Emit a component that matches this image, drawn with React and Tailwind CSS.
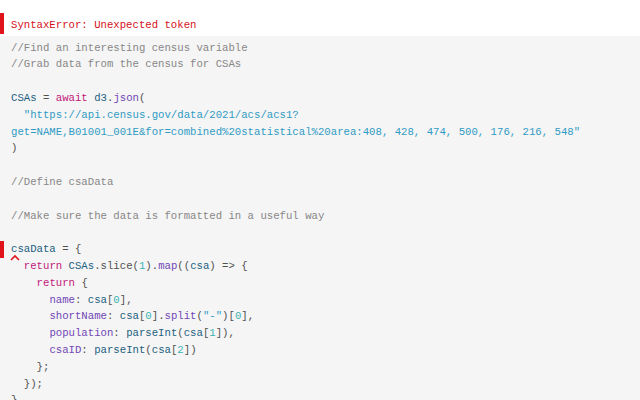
import React from "react";

const C = {
  cm: "text-[#878787]",
  kw: "text-[#c2187a]",
  str: "text-[#2f9bc4]",
  num: "text-[#3bb3b3]",
  prop: "text-[#7046b5]",
  fn: "text-[#7046b5]",
  v: "text-[#1c6080]",
  p: "text-[#505050]",
};

const S = ({ c, children }) => <span className={C[c]}>{children}</span>;

const lines = [
  [<S c="cm">//Find an interesting census variable</S>],
  [<S c="cm">//Grab data from the census for CSAs</S>],
  [],
  [<S c="v">CSAs</S>, <S c="p"> = </S>, <S c="kw">await</S>, <S c="p"> </S>, <S c="v">d3</S>, <S c="p">.</S>, <S c="fn">json</S>, <S c="p">(</S>],
  [<S c="str">{'  "https://api.census.gov/data/2021/acs/acs1?'}</S>],
  [<S c="str">{'get=NAME,B01001_001E&for=combined%20statistical%20area:408, 428, 474, 500, 176, 216, 548"'}</S>],
  [<S c="p">)</S>],
  [],
  [<S c="cm">//Define csaData</S>],
  [],
  [<S c="cm">//Make sure the data is formatted in a useful way</S>],
  [],
  "err",
  [<S c="p">{"  "}</S>, <S c="kw">return</S>, <S c="p"> </S>, <S c="v">CSAs</S>, <S c="p">.slice(</S>, <S c="num">1</S>, <S c="p">).</S>, <S c="fn">map</S>, <S c="p">((</S>, <S c="v">csa</S>, <S c="p">) =&gt; {"{"}</S>],
  [<S c="p">{"    "}</S>, <S c="kw">return</S>, <S c="p"> {"{"}</S>],
  [<S c="p">{"      "}</S>, <S c="prop">name</S>, <S c="p">: </S>, <S c="v">csa</S>, <S c="p">[</S>, <S c="num">0</S>, <S c="p">],</S>],
  [<S c="p">{"      "}</S>, <S c="prop">shortName</S>, <S c="p">: </S>, <S c="v">csa</S>, <S c="p">[</S>, <S c="num">0</S>, <S c="p">].</S>, <S c="fn">split</S>, <S c="p">(</S>, <S c="str">"-"</S>, <S c="p">)[</S>, <S c="num">0</S>, <S c="p">],</S>],
  [<S c="p">{"      "}</S>, <S c="prop">population</S>, <S c="p">: </S>, <S c="v">parseInt</S>, <S c="p">(</S>, <S c="v">csa</S>, <S c="p">[</S>, <S c="num">1</S>, <S c="p">]),</S>],
  [<S c="p">{"      "}</S>, <S c="prop">csaID</S>, <S c="p">: </S>, <S c="v">parseInt</S>, <S c="p">(</S>, <S c="v">csa</S>, <S c="p">[</S>, <S c="num">2</S>, <S c="p">])</S>],
  [<S c="p">{"    };"}</S>],
  [<S c="p">{"  });"}</S>],
  [<S c="p">{"}"}</S>],
];

export default function App() {
  return (
    <div
      className="w-[640px] h-[400px] overflow-hidden bg-white text-[10.67px]"
      style={{ fontFamily: '"Liberation Mono", monospace' }}
    >
      <div className="pt-[13px] h-[36px]">
        <div className="h-[21px] border-l-[4px] border-[#e0121b] pl-[7px] pt-[4px] leading-[16px] text-[#d4111c] whitespace-pre">
          SyntaxError: Unexpected token
        </div>
      </div>
      <div className="bg-[#f5f5f5] pt-[3.6px] pb-4">
        {lines.map((l, i) =>
          l === "err" ? (
            <div key={i} className="relative h-[16.8px] leading-[16.8px] pl-[11px] whitespace-pre">
              <div className="absolute left-0 top-0 w-[4px] h-[16.8px] bg-[#e0121b]" />
              <S c="v">csaData</S>
              <S c="p">{" = {"}</S>
              <svg className="absolute left-[10px] top-[13px]" width="10" height="7" viewBox="0 0 10 7">
                <path d="M1 6 L5 2 L9 6" fill="none" stroke="#e0121b" strokeWidth="1.6" />
              </svg>
            </div>
          ) : (
            <div key={i} className="h-[16.8px] leading-[16.8px] pl-[11px] whitespace-pre">
              {l.map((x, j) => (
                <React.Fragment key={j}>{x}</React.Fragment>
              ))}
            </div>
          )
        )}
      </div>
    </div>
  );
}
